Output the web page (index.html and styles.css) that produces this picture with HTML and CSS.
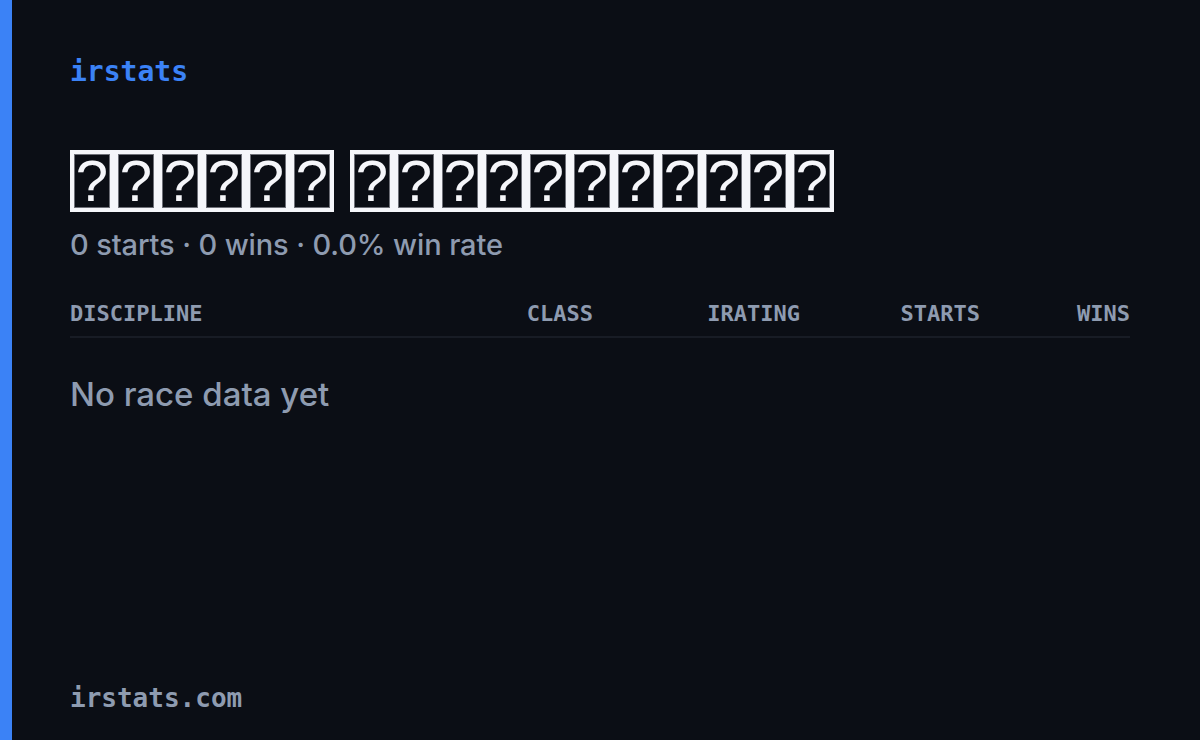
FILE: index.html
```html
<!DOCTYPE html>
<html lang="en">
<head>
    <meta charset="UTF-8">
    <meta name="viewport" content="width=device-width, initial-scale=1.0">
    <title>irstats</title>
    <link rel="stylesheet" href="styles.css">
</head>
<body>

    <div class="card">
        <div class="brand">irstats</div>

        <h1 class="driver-name">
            <span class="word"><span class="glyph">?</span><span class="glyph">?</span><span class="glyph">?</span><span class="glyph">?</span><span class="glyph">?</span><span class="glyph">?</span></span>
            <span class="word"><span class="glyph">?</span><span class="glyph">?</span><span class="glyph">?</span><span class="glyph">?</span><span class="glyph">?</span><span class="glyph">?</span><span class="glyph">?</span><span class="glyph">?</span><span class="glyph">?</span><span class="glyph">?</span><span class="glyph">?</span></span>
        </h1>
        <p class="summary">0 starts · 0 wins · 0.0% win rate</p>

        <div class="stats-head">
            <span class="col-left">DISCIPLINE</span>
            <span>CLASS</span>
            <span>IRATING</span>
            <span>STARTS</span>
            <span>WINS</span>
        </div>
        <!-- no rows for this driver -->
        <p class="empty">No race data yet</p>

        <div class="footer">irstats.com</div>
    </div>

</body>
</html>
```

FILE: styles.css
```css
html, body {
    margin: 0;
    padding: 0;
    height: 100%;
}

body {
    background-color: #0b0e15;
    border-left: 12px solid #3b82f6;
    box-sizing: border-box;
    font-family: 'Inter', sans-serif;
}

.card {
    height: 100%;
    box-sizing: border-box;
    padding: 54px 70px 24px 58px;
    display: flex;
    flex-direction: column;
}

.brand {
    font-family: 'DejaVu Sans Mono', monospace;
    font-weight: bold;
    font-size: 28px;
    color: #3b82f6;
    line-height: 36px;
}

.driver-name {
    margin: 60px 0 0 0;
    display: flex;
    gap: 16px;
    font-weight: normal;
}

.word {
    display: flex;
    gap: 8px;
    padding: 4px;
    background-color: #f5f6fa;
}

.glyph {
    box-sizing: border-box;
    width: 36px;
    height: 54px;
    background-color: #0b0e15;
    border: 1px solid #6e7078;
    color: #f5f6fa;
    font-family: 'Liberation Sans', sans-serif;
    font-size: 58px;
    line-height: 52px;
    text-align: center;
}

.summary {
    margin: 14px 0 0 0;
    font-size: 29px;
    font-weight: 500;
    letter-spacing: -0.12px;
    line-height: 38px;
    color: #8e9bb0;
}

.stats-head {
    margin-top: 36px;
    display: grid;
    grid-template-columns: 1fr 160px 207px 180px 150px;
    text-align: right;
    padding-bottom: 8px;
    border-bottom: 2px solid #181c25;
    font-family: 'DejaVu Sans Mono', monospace;
    font-weight: bold;
    font-size: 22px;
    line-height: 28px;
    color: #8e9bb0;
}

.stats-head .col-left {
    text-align: left;
}

.empty {
    margin: 34px 0 0 0;
    font-size: 33px;
    font-weight: 500;
    line-height: 44px;
    color: #8e9bb0;
}

.footer {
    margin-top: auto;
    font-family: 'DejaVu Sans Mono', monospace;
    font-weight: bold;
    font-size: 26px;
    line-height: 36px;
    color: #8e9bb0;
}
```
